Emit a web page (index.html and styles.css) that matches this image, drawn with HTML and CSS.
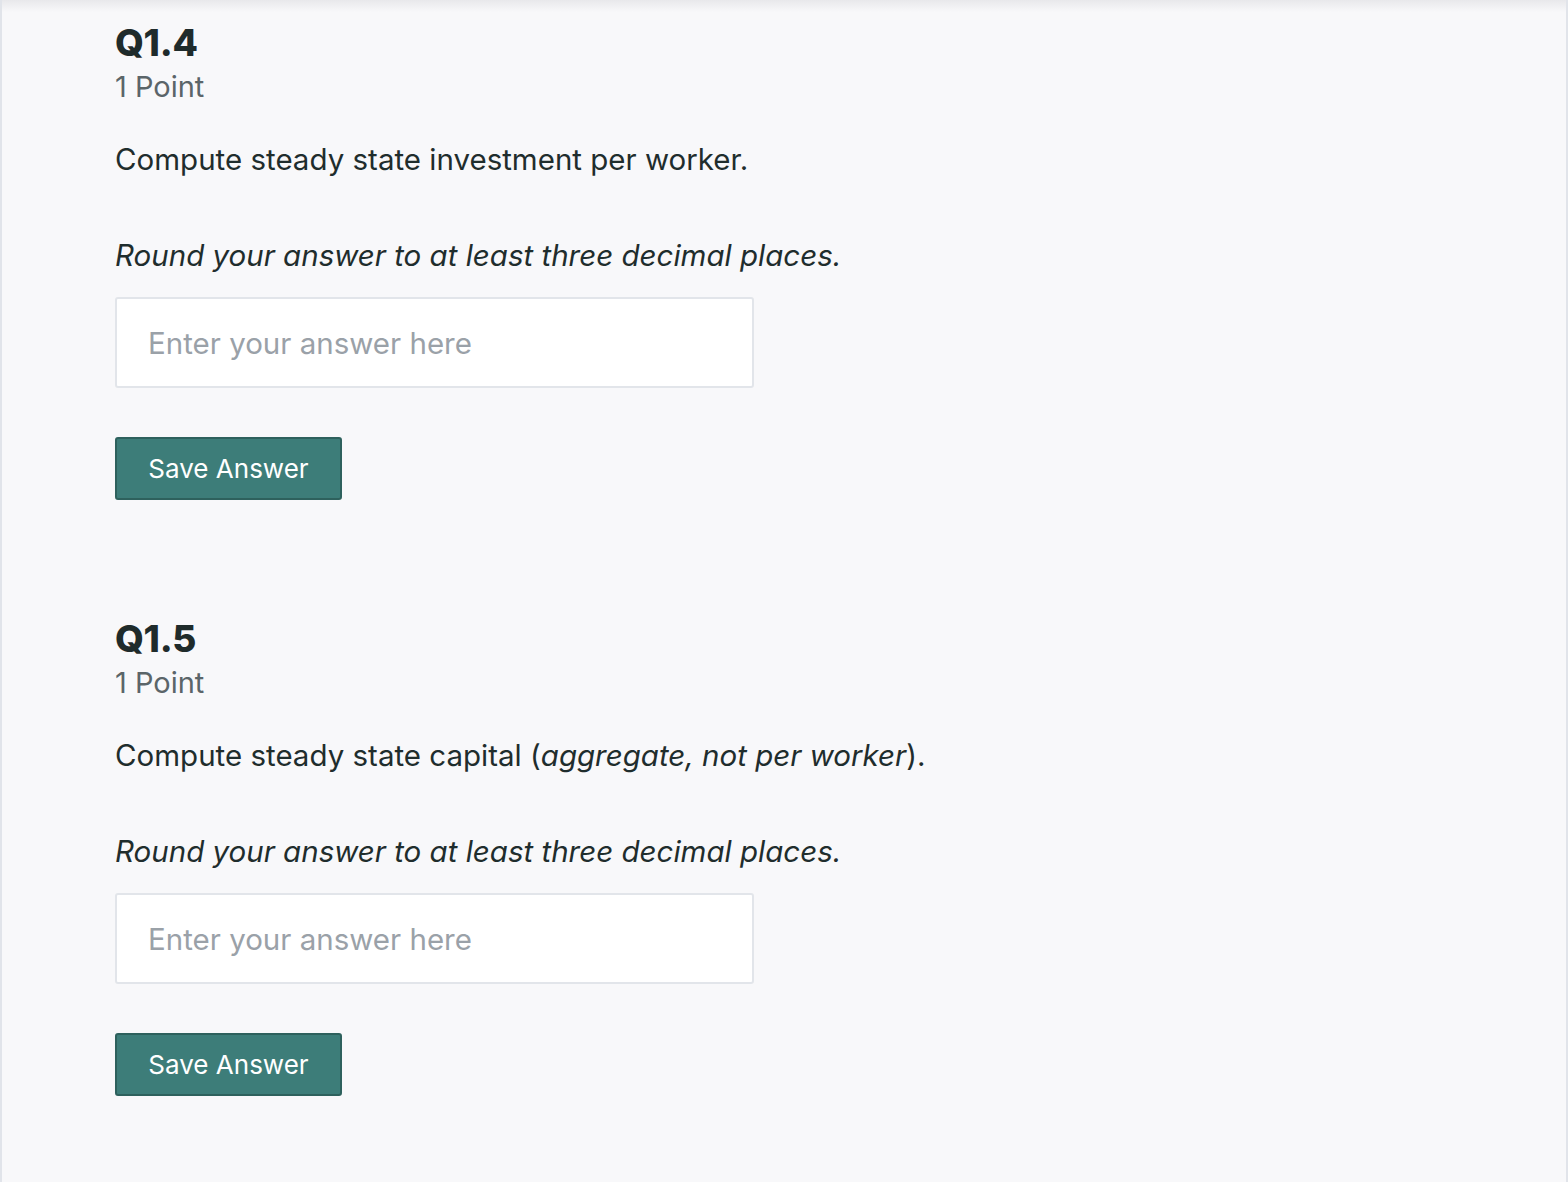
FILE: index.html
```html
<!DOCTYPE html>
<html>
<head>
<meta charset="utf-8">
<link rel="stylesheet" href="styles.css">
</head>
<body>
<div class="page">
  <section class="question">
    <h2 class="q-title">Q1.4</h2>
    <div class="q-points">1 Point</div>
    <p class="q-text">Compute steady state investment per worker.</p>
    <p class="q-text q-note"><em>Round your answer to at least three decimal places.</em></p>
    <input class="q-input" type="text" placeholder="Enter your answer here">
    <button class="q-save" type="button">Save Answer</button>
  </section>
  <section class="question">
    <h2 class="q-title">Q1.5</h2>
    <div class="q-points">1 Point</div>
    <p class="q-text">Compute steady state capital (<em>aggregate, not per worker</em>).</p>
    <p class="q-text q-note"><em>Round your answer to at least three decimal places.</em></p>
    <input class="q-input" type="text" placeholder="Enter your answer here">
    <button class="q-save" type="button">Save Answer</button>
  </section>
</div>
</body>
</html>
```
FILE: styles.css
```css
html, body {
  margin: 0;
  padding: 0;
  background: #f8f8fa;
}
body {
  font-family: Inter, "Liberation Sans", sans-serif;
  color: #1f2d2d;
}
.page {
  min-height: 1182px;
  box-sizing: border-box;
  border-left: 2px solid #e1e4ea;
  border-right: 2px solid #e1e4ea;
  background: linear-gradient(#e8e8eb, #f8f8fa 12px, #f8f8fa);
  padding: 20px 0 0 113px;
}
.question {
  padding-bottom: 116px;
}
.q-title {
  margin: 0;
  font-size: 37px;
  line-height: 46px;
  font-weight: 800;
  letter-spacing: -0.3px;
  color: #1f2b2b;
}
.q-points {
  font-size: 29px;
  line-height: 42px;
  color: #5b6569;
}
.q-text {
  margin: 31px 0 0;
  font-size: 29.5px;
  line-height: 40px;
}
.q-note {
  margin-top: 56px;
}
.q-note em {
  font-style: italic;
}
.q-input {
  display: block;
  margin-top: 22px;
  width: 639px;
  height: 91px;
  box-sizing: border-box;
  border: 2px solid #e2e5ea;
  border-radius: 3px;
  background: #fff;
  padding: 0 31px;
  font-family: inherit;
  font-size: 29.5px;
  color: #1f2d2d;
  outline: none;
}
.q-input::placeholder {
  color: #9aa1a8;
}
.q-save {
  display: block;
  margin-top: 49px;
  width: 227px;
  height: 63px;
  box-sizing: border-box;
  background: #3d7d79;
  border: 2px solid #2e615d;
  border-radius: 3px;
  color: #fff;
  font-family: inherit;
  font-size: 26px;
  padding: 0;
}
```
